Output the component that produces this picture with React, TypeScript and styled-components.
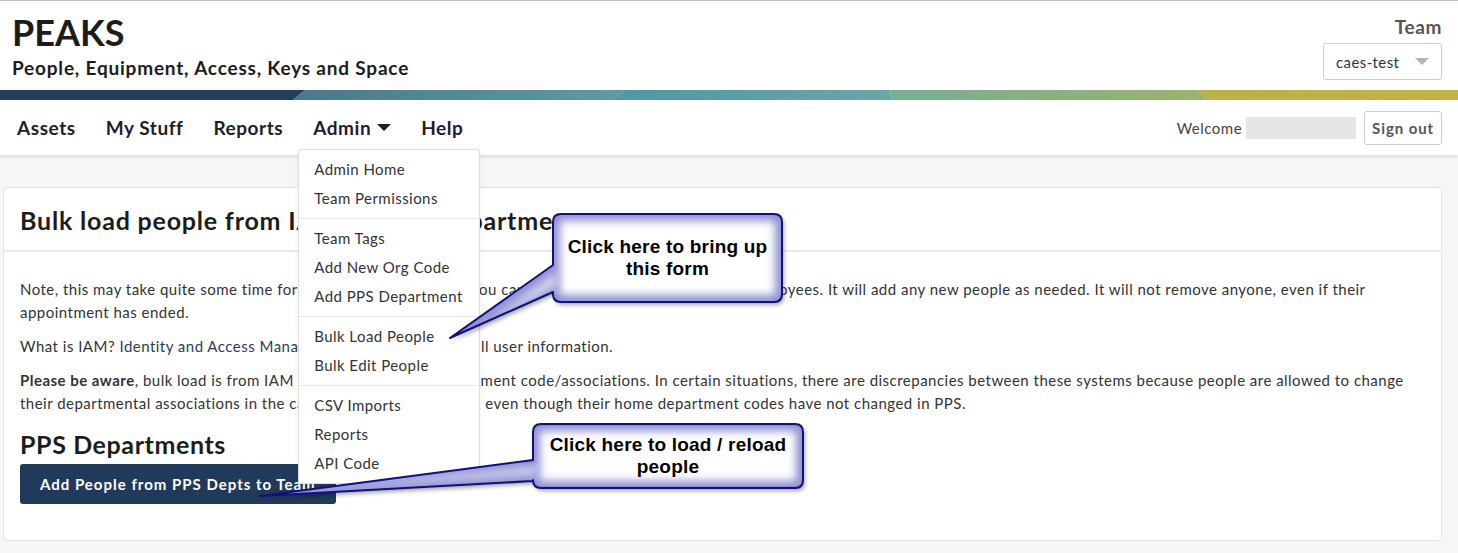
import styled, { createGlobalStyle } from 'styled-components';

const GlobalStyle = createGlobalStyle`
  body {
    margin: 0;
    background: #f5f6f8;
    font-family: Lato, "Open Sans", sans-serif;
    color: #333;
  }
`;

const Page = styled.div`
  position: relative;
  width: 1458px;
  min-height: 553px;
  overflow: hidden;
`;

const Header = styled.header`
  display: flex;
  justify-content: space-between;
  align-items: flex-start;
  height: 89px;
  padding: 0 16px 0 12px;
  background: #fff;
  border-top: 1px solid #bdbdbd;
`;

const Brand = styled.div`
  display: flex;
  flex-direction: column;
`;

const Title = styled.h1`
  margin: 12px 0 0;
  font-size: 36px;
  font-weight: 700;
  line-height: 38px;
  color: #1c1c1c;
`;

const Subtitle = styled.div`
  margin-top: 5px;
  font-size: 19px;
  font-weight: 700;
  letter-spacing: 0.8px;
  color: #1c1c1c;
`;

const TeamBlock = styled.div`
  display: flex;
  flex-direction: column;
  align-items: flex-end;
`;

const TeamLabel = styled.div`
  margin-top: 14px;
  font-size: 19px;
  font-weight: 700;
  letter-spacing: 0.6px;
  color: #555;
`;

const TeamSelect = styled.div`
  display: flex;
  align-items: center;
  justify-content: space-between;
  box-sizing: border-box;
  width: 119px;
  height: 37px;
  margin-top: 5px;
  padding: 0 12px;
  border: 1px solid #ccc;
  border-radius: 3px;
  font-size: 15px;
  letter-spacing: 0.4px;
  color: #333;
`;

const Caret = styled.span<{ $color: string; $size: number }>`
  display: inline-block;
  width: 0;
  height: 0;
  border-left: ${(p) => p.$size}px solid transparent;
  border-right: ${(p) => p.$size}px solid transparent;
  border-top: ${(p) => p.$size}px solid ${(p) => p.$color};
`;

const Banner = styled.svg`
  display: block;
  width: 100%;
  height: 10px;
`;

const Nav = styled.nav`
  position: relative;
  z-index: 2;
  display: flex;
  align-items: center;
  justify-content: space-between;
  height: 55px;
  padding: 0 16px 0 2px;
  background: #fff;
  box-shadow: 0 2px 3px rgba(0, 0, 0, 0.1);
`;

const NavList = styled.div`
  display: flex;
  align-items: center;
  height: 100%;
`;

const NavItem = styled.div`
  position: relative;
  display: flex;
  align-items: center;
  gap: 6px;
  padding: 0 15px;
  height: 100%;
  font-size: 19px;
  font-weight: 700;
  letter-spacing: 0.55px;
  color: #1d1d2b;
`;

const Dropdown = styled.div`
  position: absolute;
  top: 49px;
  left: 0;
  width: 180px;
  padding: 5px 0;
  background: #fff;
  border: 1px solid #ddd;
  border-radius: 3px;
  box-shadow: 0 2px 6px rgba(0, 0, 0, 0.06);
  letter-spacing: 0.45px;
`;

const MenuItem = styled.div`
  height: 29px;
  line-height: 29px;
  padding-left: 15px;
  font-size: 15px;
  font-weight: 400;
  color: #333;
`;

const MenuDivider = styled.div`
  height: 1px;
  margin: 5px 0;
  background: #e5e5e5;
`;

const UserArea = styled.div`
  display: flex;
  align-items: center;
  font-size: 15px;
  letter-spacing: 0.5px;
  color: #444;
`;

const Redacted = styled.span`
  display: inline-block;
  width: 110px;
  height: 22px;
  margin: 0 8px 0 4px;
  background: #e6e6e6;
`;

const SignOut = styled.button`
  height: 34px;
  padding: 0 7px;
  background: #fff;
  border: 1px solid #ccc;
  border-radius: 3px;
  font-family: inherit;
  font-size: 15px;
  font-weight: 700;
  letter-spacing: 0.9px;
  color: #555;
`;

const Main = styled.main`
  padding: 32px 16px 13px 3px;
`;

const Card = styled.section`
  background: #fff;
  border: 1px solid #e4e5e8;
  border-radius: 4px;
`;

const CardHeader = styled.div`
  padding: 0 16px;
  height: 62px;
  display: flex;
  align-items: center;
  border-bottom: 2px solid #e8e9ec;
`;

const CardTitle = styled.h2`
  margin: 2px 0 0;
  font-size: 25px;
  font-weight: 700;
  letter-spacing: 0.8px;
  color: #1c1c1c;
`;

const CardBody = styled.div`
  padding: 26px 16px 36px;
`;

const Para = styled.p`
  margin: 0 0 11px;
  font-size: 15px;
  line-height: 23px;
  letter-spacing: 0.48px;
  color: #333;
`;

const Link = styled.span`
  color: #2c3e55;
`;

const SectionTitle = styled.h3`
  margin: 14px 0 5px;
  font-size: 25px;
  font-weight: 700;
  line-height: 30px;
  letter-spacing: 0.6px;
  color: #1c1c1c;
`;

const PrimaryButton = styled.button`
  height: 40px;
  padding: 0 20px;
  background: #213a5c;
  border: none;
  border-radius: 3px;
  font-family: inherit;
  font-size: 15px;
  font-weight: 700;
  letter-spacing: 1px;
  color: #fff;
`;

const CalloutWrap = styled.div`
  position: absolute;
  z-index: 5;
  pointer-events: none;
`;

const CalloutText = styled.div`
  position: absolute;
  display: flex;
  align-items: center;
  justify-content: center;
  text-align: center;
  font-family: "Liberation Sans", Arial, sans-serif;
  font-size: 19px;
  font-weight: 700;
  line-height: 22px;
  letter-spacing: 0.2px;
  color: #000;
`;

type CalloutProps = {
  id: string;
  box: { x: number; y: number; w: number; h: number };
  base: [number, number];
  tip: [number, number];
  children: React.ReactNode;
};

const Callout = ({ id, box, base, tip, children }: CalloutProps) => {
  const ox = Math.min(box.x, tip[0]) - 6;
  const oy = Math.min(box.y, tip[1]) - 6;
  const W = Math.max(box.x + box.w, tip[0]) - ox + 10;
  const H = Math.max(box.y + box.h, tip[1]) - oy + 10;
  const x = box.x - ox;
  const y = box.y - oy;
  const { w, h } = box;
  const r = 8;
  const d = `M${x + r},${y} H${x + w - r} Q${x + w},${y} ${x + w},${y + r} V${y + h - r} Q${x + w},${y + h} ${x + w - r},${y + h} H${x + r} Q${x},${y + h} ${x},${y + h - r} V${base[1] - oy} L${tip[0] - ox},${tip[1] - oy} L${x},${base[0] - oy} V${y + r} Q${x},${y} ${x + r},${y} Z`;
  return (
    <CalloutWrap style={{ left: ox, top: oy, width: W, height: H }}>
      <svg width={W} height={H}>
        <defs>
          <filter id={`${id}-shadow`} x="-10%" y="-10%" width="130%" height="130%">
            <feDropShadow dx="2" dy="3" stdDeviation="2" floodColor="#000" floodOpacity="0.35" />
          </filter>
          <filter id={`${id}-blur`}>
            <feGaussianBlur stdDeviation="4" />
          </filter>
          <clipPath id={`${id}-clip`}>
            <path d={d} />
          </clipPath>
        </defs>
        <path d={d} fill="#8f8fd2" filter={`url(#${id}-shadow)`} />
        <g clipPath={`url(#${id}-clip)`}>
          <rect x={x + 7} y={y + 7} width={w - 14} height={h - 14} fill="#fff" filter={`url(#${id}-blur)`} />
          <polygon
            points={`${x + 4},${base[0] - oy + 6} ${tip[0] - ox + 20},${tip[1] - oy - 4} ${x + 4},${base[1] - oy - 6}`}
            fill="#d4d4f0"
            filter={`url(#${id}-blur)`}
          />
        </g>
        <path d={d} fill="none" stroke="#10107e" strokeWidth="2" strokeLinejoin="round" />
      </svg>
      <CalloutText style={{ left: x, top: y, width: w, height: h }}>{children}</CalloutText>
    </CalloutWrap>
  );
};

const bannerStops = [
  { pts: '0,0 305,0 293,10 0,10', from: '#243c5b', to: '#253e5d' },
  { pts: '305,0 625,0 612,10 293,10', from: '#4a798c', to: '#5e9ba4' },
  { pts: '625,0 889,0 893,10 612,10', from: '#4b98a8', to: '#68a9a7' },
  { pts: '889,0 1198,0 1207,10 893,10', from: '#77ae93', to: '#9bb36e' },
  { pts: '1198,0 1458,0 1458,10 1207,10', from: '#bcb14b', to: '#c5b047' },
];

const App = () => {
  return (
    <Page>
      <GlobalStyle />
      <Header>
        <Brand>
          <Title>PEAKS</Title>
          <Subtitle>People, Equipment, Access, Keys and Space</Subtitle>
        </Brand>
        <TeamBlock>
          <TeamLabel>Team</TeamLabel>
          <TeamSelect>
            caes-test
            <Caret $color="#b5b5b5" $size={7} />
          </TeamSelect>
        </TeamBlock>
      </Header>
      <Banner viewBox="0 0 1458 10" preserveAspectRatio="none">
        <defs>
          {bannerStops.map((s, i) => (
            <linearGradient key={i} id={`band-${i}`} x1="0" x2="1" y1="0" y2="0">
              <stop offset="0" stopColor={s.from} />
              <stop offset="1" stopColor={s.to} />
            </linearGradient>
          ))}
        </defs>
        {bannerStops.map((s, i) => (
          <polygon key={i} points={s.pts} fill={`url(#band-${i})`} />
        ))}
      </Banner>
      <Nav>
        <NavList>
          <NavItem>Assets</NavItem>
          <NavItem>My Stuff</NavItem>
          <NavItem>Reports</NavItem>
          <NavItem>
            Admin <Caret $color="#1d1d2b" $size={7} />
            <Dropdown>
              <MenuItem>Admin Home</MenuItem>
              <MenuItem>Team Permissions</MenuItem>
              <MenuDivider />
              <MenuItem>Team Tags</MenuItem>
              <MenuItem>Add New Org Code</MenuItem>
              <MenuItem>Add PPS Department</MenuItem>
              <MenuDivider />
              <MenuItem>Bulk Load People</MenuItem>
              <MenuItem>Bulk Edit People</MenuItem>
              <MenuDivider />
              <MenuItem>CSV Imports</MenuItem>
              <MenuItem>Reports</MenuItem>
              <MenuItem>API Code</MenuItem>
            </Dropdown>
          </NavItem>
          <NavItem>Help</NavItem>
        </NavList>
        <UserArea>
          Welcome
          <Redacted />
          <SignOut>Sign out</SignOut>
        </UserArea>
      </Nav>
      <Main>
        <Card>
          <CardHeader>
            <CardTitle>Bulk load people from IAM by PPS Departments</CardTitle>
          </CardHeader>
          <CardBody>
            <Para>
              Note, this may take quite some time for very large departments. You can close this page and it will
              load employees. It will add any new people as needed. It will not remove anyone, even if their
              appointment has ended.
            </Para>
            <Para>
              What is IAM? <Link>Identity and Access Management</Link> is the source for all user information.
            </Para>
            <Para>
              <b>Please be aware</b>, bulk load is from IAM based on their PPS department code/associations. In
              certain situations, there are discrepancies between these systems because people are allowed to change
              their departmental associations in the campus directory (via IAM), even though their home department
              codes have not changed in PPS.
            </Para>
            <SectionTitle>PPS Departments</SectionTitle>
            <PrimaryButton>Add People from PPS Depts to Team</PrimaryButton>
          </CardBody>
        </Card>
      </Main>
      <Callout id="c1" box={{ x: 553, y: 214, w: 229, h: 88 }} base={[265, 292]} tip={[450, 338]}>
        Click here to bring up
        <br />
        this form
      </Callout>
      <Callout id="c2" box={{ x: 533, y: 424, w: 270, h: 64 }} base={[460, 481]} tip={[260, 496]}>
        Click here to load / reload
        <br />
        people
      </Callout>
    </Page>
  );
};

export default App;
